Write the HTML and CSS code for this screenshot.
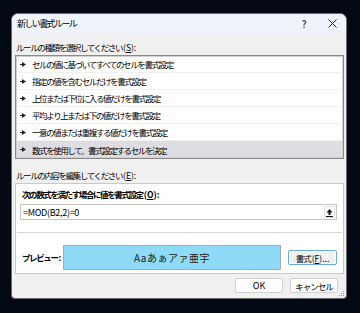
FILE: index.html
```html
<!DOCTYPE html>
<html lang="ja">
<head>
  <meta charset="UTF-8">
  <title>新しい書式ルール</title>
  <link rel="stylesheet" href="styles.css">
</head>
<body>
  <div class="dialog">
    <div class="titlebar">
      <span class="title">新しい書式ルール</span>
      <span class="help">?</span>
      <span class="close">
        <svg width="9" height="9" viewBox="0 0 9 9"><path d="M0.5 0.5L8.5 8.5M8.5 0.5L0.5 8.5" stroke="#222" stroke-width="1"/></svg>
      </span>
    </div>

    <div class="content">
      <div class="label">ルールの種類を選択してください<span class="mn">(<u>S</u>):</span></div>
      <div class="rulelist">
        <div class="rule"><svg class="arrow" width="6" height="5" viewBox="0 0 6 5"><rect x="0" y="2" width="3" height="1" fill="#222"/><path d="M2 0L6 2.5L2 5Z" fill="#222"/></svg>セルの値に基づいてすべてのセルを書式設定</div>
        <div class="rule"><svg class="arrow" width="6" height="5" viewBox="0 0 6 5"><rect x="0" y="2" width="3" height="1" fill="#222"/><path d="M2 0L6 2.5L2 5Z" fill="#222"/></svg>指定の値を含むセルだけを書式設定</div>
        <div class="rule"><svg class="arrow" width="6" height="5" viewBox="0 0 6 5"><rect x="0" y="2" width="3" height="1" fill="#222"/><path d="M2 0L6 2.5L2 5Z" fill="#222"/></svg>上位または下位に入る値だけを書式設定</div>
        <div class="rule"><svg class="arrow" width="6" height="5" viewBox="0 0 6 5"><rect x="0" y="2" width="3" height="1" fill="#222"/><path d="M2 0L6 2.5L2 5Z" fill="#222"/></svg>平均より上または下の値だけを書式設定</div>
        <div class="rule"><svg class="arrow" width="6" height="5" viewBox="0 0 6 5"><rect x="0" y="2" width="3" height="1" fill="#222"/><path d="M2 0L6 2.5L2 5Z" fill="#222"/></svg>一意の値または重複する値だけを書式設定</div>
        <div class="rule selected"><svg class="arrow" width="6" height="5" viewBox="0 0 6 5"><rect x="0" y="2" width="3" height="1" fill="#222"/><path d="M2 0L6 2.5L2 5Z" fill="#222"/></svg>数式を使用して、書式設定するセルを決定</div>
      </div>

      <div class="label second">ルールの内容を編集してください<span class="mn">(<u>E</u>):</span></div>
      <div class="group">
        <div class="bold-label">次の数式を満たす場合に値を書式設定<span class="mn">(<u>O</u>):</span></div>
        <div class="formula">
          <span class="formula-text">=MOD(B2,2)=0</span>
          <span class="collapse">
            <svg width="7" height="9" viewBox="0 0 7 9"><path d="M3.5 1L0.5 4.5H2.5V7H4.5V4.5H6.5Z" fill="#111"/><rect x="0" y="8" width="7" height="1" fill="#111"/></svg>
          </span>
        </div>
        <div class="sep"></div>
        <div class="preview-row">
          <span class="bold-label preview-label">プレビュー<span class="mn">:</span></span>
          <div class="preview">Aaあぁアァ亜宇</div>
          <button class="btn focus">書式<span class="mn">(<u>F</u>)...</span></button>
        </div>
      </div>

      <div class="footer">
        <button class="btn wide latin">OK</button>
        <button class="btn wide">キャンセル</button>
      </div>
    </div>
    <svg class="grip" width="7" height="7" viewBox="0 0 7 7">
      <rect x="5" y="1" width="1" height="1" fill="#999"/>
      <rect x="3" y="3" width="1" height="1" fill="#999"/>
      <rect x="5" y="3" width="1" height="1" fill="#999"/>
      <rect x="1" y="5" width="1" height="1" fill="#999"/>
      <rect x="3" y="5" width="1" height="1" fill="#999"/>
      <rect x="5" y="5" width="1" height="1" fill="#999"/>
    </svg>
  </div>
</body>
</html>
```

FILE: styles.css
```css
body {
  margin: 0;
  width: 360px;
  height: 313px;
  background: #030914;
  font-family: "Noto Sans CJK JP", "Noto Sans", sans-serif;
  font-size: 8.5px;
  letter-spacing: -1.4px;
  color: #000;
  overflow: hidden;
}
.mn { letter-spacing: 0; margin-left: 1px; }
.dialog {
  position: relative;
  margin: 13px 0 0 11px;
  width: 336px;
  height: 286px;
  box-sizing: border-box;
  background: #f0f0f0;
  border: 1px solid #6b6b6b;
  border-radius: 7px 7px 4px 4px;
  overflow: hidden;
}
.titlebar {
  display: flex;
  align-items: center;
  height: 19px;
  background: #eff3fb;
  padding-left: 5px;
  font-size: 9px;
}
.title { flex: 1; letter-spacing: -1.6px; }
.help { width: 30px; text-align: center; font-size: 10px; letter-spacing: 0; }
.close { width: 27px; display: flex; justify-content: center; }
.content { padding: 0 2px 0 3px; }
.label {
  height: 14px;
  line-height: 14px;
  margin-top: 7px;
  padding-left: 1px;
}
.label.second { margin-top: 9px; }
.rulelist {
  margin-top: 1px;
  width: 329px;
  box-sizing: border-box;
  background: #fff;
  border: 1px solid #8a8a8a;
  outline: 1px solid #d0d0d0;
  outline-offset: -2px;
}
.rule {
  display: flex;
  align-items: center;
  height: 17px;
  box-sizing: border-box;
  padding: 0 2px 0 2px;
  border-bottom: 1px solid #f0f0f0;
  margin: 0 2px;
}
.rule:last-child { border-bottom: none; }
.rule.selected { background: #dedde2; margin: 0; padding-left: 4px; }
.arrow { margin-right: 6px; flex: none; }
.group {
  margin-top: 1px;
  width: 329px;
  height: 91px;
  box-sizing: border-box;
  background: #fff;
  border: 1px solid #c8c8c8;
  padding: 4px 6px 0 4px;
}
.bold-label { font-weight: bold; height: 13px; line-height: 13px; padding-left: 2px; white-space: nowrap; }
.formula {
  margin-top: 3px;
  display: flex;
  align-items: center;
  height: 16px;
  box-sizing: border-box;
  border: 1px solid #c6c6c6;
  padding-left: 2px;
  font-size: 9px;
}
.formula-text { flex: 1; letter-spacing: -0.3px; }
.collapse {
  width: 11px;
  height: 12px;
  margin-right: 1px;
  display: flex;
  align-items: center;
  justify-content: center;
  border: 1px solid #e0e0e0;
  box-sizing: border-box;
}
.sep {
  margin: 12px -5px 0 -3px;
  height: 1px;
  background: #d6d6d6;
}
.preview-row {
  display: flex;
  align-items: center;
  margin-top: 12px;
}
.preview-label { width: 43px; flex: none; box-sizing: border-box; }
.preview {
  width: 218px;
  height: 25px;
  flex: none;
  box-sizing: border-box;
  background: #8fdbf7;
  border: 1px solid #a9a9a9;
  display: flex;
  align-items: center;
  justify-content: center;
  font-size: 10px;
  letter-spacing: 0.5px;
  color: #222;
}
.btn {
  font-family: inherit;
  font-size: 8.5px;
  letter-spacing: -1px;
  color: #000;
  height: 15px;
  padding: 0;
  background: #fdfdfd;
  border: 1px solid #d0d0d0;
  border-radius: 2px;
}
.btn.latin { letter-spacing: 0; font-size: 9px; }
.btn.focus {
  margin-left: 7px;
  width: 49px;
  background: #f0f0f0;
  border: 1px solid #6aa8e0;
  box-shadow: inset 0 0 0 1px #fff;
}
.footer {
  display: flex;
  justify-content: flex-end;
  gap: 7px;
  margin-top: 4px;
  padding-right: 6px;
}
.btn.wide { width: 48px; }
.grip { position: absolute; right: 1px; bottom: 1px; }
```
